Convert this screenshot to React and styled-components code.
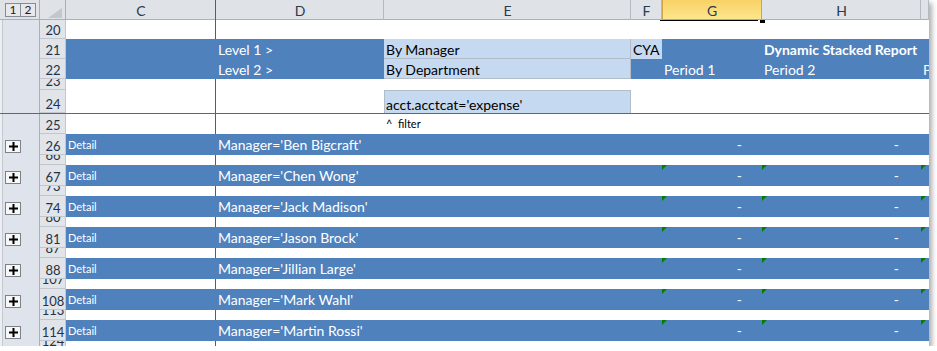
import React from "react";
import styled, { createGlobalStyle } from "styled-components";

const Global = createGlobalStyle`
  body {
    margin: 0;
    background: #fff;
    font-family: Lato, "Liberation Sans", sans-serif;
  }
`;

const COLS = "40px 26px 150px 168px 247px 31px 100px 159px 8px";
const BLUE = "#4f81bd";
const LIGHT = "#c5d9f1";

const Sheet = styled.div`
  width: 929px;
  height: 346px;
  overflow: hidden;
  background: #fff;
  box-shadow: 3px 3px 5px rgba(0, 0, 0, 0.32);
`;

const Row = styled.div`
  display: grid;
  grid-template-columns: ${COLS};
  height: ${(p) => p.$h}px;
`;

const Gutter = styled.div`
  display: flex;
  align-items: ${(p) => (p.$top ? "center" : "flex-end")};
  padding: ${(p) => (p.$top ? "0 0 0 5px" : "0 0 2px 5px")};
  background: ${(p) =>
    p.$top
      ? "#dfe2e7"
      : "linear-gradient(to right, #eceef2 0 2px, #c4cad3 2px 3px, #dfe3ec 3px)"};
  box-shadow: inset -1px 0 #a9b0ba ${(p) => (p.$top ? ", inset 0 -1px #a9b0ba" : "")};
`;

const LevelBtn = styled.div`
  width: 14px;
  height: 12px;
  border: 1px solid #868c94;
  margin-right: -1px;
  background: #e6e8ec;
  color: #1c1c1c;
  font-size: 12px;
  line-height: 12px;
  text-align: center;
`;

const PlusBtn = styled.div`
  width: 14px;
  height: 11px;
  border: 1px solid #7d828a;
  background: #f7f7f7;
  display: flex;
  align-items: center;
  justify-content: center;
`;

const Corner = styled.div`
  display: flex;
  align-items: flex-end;
  justify-content: flex-end;
  padding: 0 4px 2px 0;
  background: #dfe2e7;
  box-shadow: inset -1px -1px #a9b0ba;
`;

const ColHead = styled.div`
  position: relative;
  display: flex;
  align-items: center;
  justify-content: center;
  font-size: 14px;
  color: #2c3a4d;
  background: ${(p) => (p.$sel ? "linear-gradient(#f8d166, #fde88e)" : "#dfe2e7")};
  box-shadow: ${(p) =>
    p.$sel
      ? "inset 1px 0 #d1a446, inset -1px 0 #d1a446, inset 0 -1px #d1a446"
      : `inset -1px 0 ${p.$freeze ? "#5c5c5c" : "#b3bac3"}, inset 0 -1px #a9b0ba`};

  ${(p) =>
    p.$sel &&
    `
    &::after {
      content: "";
      position: absolute;
      left: -2px;
      bottom: -1px;
      width: 98px;
      height: 1px;
      background: #000;
    }
    &::before {
      content: "";
      position: absolute;
      right: -3px;
      bottom: -3px;
      width: 5px;
      height: 3px;
      background: #000;
      z-index: 2;
    }
  `}
`;

const RowNum = styled.div`
  display: flex;
  align-items: ${(p) => (p.$short ? "flex-start" : "flex-end")};
  justify-content: center;
  padding-bottom: ${(p) => (p.$short ? 0 : 2)}px;
  overflow: hidden;
  background: #e1e4e9;
  box-shadow: inset -1px -1px #c2c7ce;
  color: #253246;
  font-size: 13px;
  line-height: 14px;

  span {
    margin-top: ${(p) => (p.$short ? `${p.$shift}px` : 0)};
  }
`;

const Cell = styled.div`
  position: relative;
  display: flex;
  align-items: ${(p) => (p.$mid ? "center" : "flex-end")};
  justify-content: ${(p) => (p.$right ? "flex-end" : "flex-start")};
  padding: 0 ${(p) => p.$pr || 2}px ${(p) => (p.$mid ? 0 : p.$pb ?? 1)}px 2px;
  background: ${(p) => (p.$fill === "blue" ? BLUE : p.$fill === "light" ? LIGHT : "transparent")};
  color: ${(p) => (p.$fill === "blue" ? "#fff" : "#000")};
  font-size: ${(p) => (p.$small ? 11 : 14)}px;
  line-height: ${(p) => (p.$small ? 14 : 17)}px;
  font-weight: ${(p) => (p.$bold ? 700 : 400)};
  white-space: nowrap;
  overflow: ${(p) => (p.$clip ? "hidden" : "visible")};
  box-shadow: ${(p) => p.$edge || "none"};
`;

const Flag = styled.i`
  position: absolute;
  top: 0;
  left: 0;
  width: 0;
  height: 0;
  border-top: 5px solid #008000;
  border-right: 5px solid transparent;
`;

const FreezeLine = styled.div`
  height: 1px;
  background: #666;
`;

const Plus = () => (
  <svg width="9" height="9" viewBox="0 0 9 9">
    <rect x="3.5" y="0" width="2" height="9" fill="#000" />
    <rect x="0" y="3.5" width="9" height="2" fill="#000" />
  </svg>
);

const CornerTri = () => (
  <svg width="14" height="10" viewBox="0 0 14 10">
    <polygon points="14,0 14,10 0,10" fill="#c3c7cd" />
  </svg>
);

const FREEZE = "inset -1px 0 #5c5c5c";
const LIGHT_EDGE = "inset -1px -1px #b3bdca";

const managers = [
  [26, 66, "Ben Bigcraft", false],
  [67, 73, "Chen Wong", true],
  [74, 80, "Jack Madison", true],
  [81, 87, "Jason Brock", true],
  [88, 107, "Jillian Large", true],
  [108, 113, "Mark Wahl", true],
  [114, 124, "Martin Rossi", true],
];

const Num = ({ n, short, shift }) => (
  <RowNum $short={short} $shift={shift}>
    <span>{n}</span>
  </RowNum>
);

const Blank = ({ n, h, short, shift, children }) => (
  <Row $h={h}>
    <Gutter />
    <Num n={n} short={short} shift={shift} />
    <Cell $edge={FREEZE} />
    {children || (
      <>
        <Cell />
        <Cell />
        <Cell />
        <Cell />
        <Cell />
        <Cell />
      </>
    )}
  </Row>
);

const ManagerRow = ({ n, name, flags }) => (
  <Row $h={21}>
    <Gutter>
      <PlusBtn>
        <Plus />
      </PlusBtn>
    </Gutter>
    <Num n={n} />
    <Cell $fill="blue" $small $pb={3}>
      Detail
    </Cell>
    <Cell $fill="blue" $mid>
      Manager='{name}'
    </Cell>
    <Cell $fill="blue" />
    <Cell $fill="blue" />
    <Cell $fill="blue" $mid $right $pr={20}>
      {flags && <Flag />}-
    </Cell>
    <Cell $fill="blue" $mid $right $pr={22}>
      {flags && <Flag />}-
    </Cell>
    <Cell $fill="blue">{flags && <Flag />}</Cell>
  </Row>
);

export default function App() {
  return (
    <>
      <Global />
      <Sheet>
        <Row $h={20}>
          <Gutter $top>
            <LevelBtn>1</LevelBtn>
            <LevelBtn>2</LevelBtn>
          </Gutter>
          <Corner>
            <CornerTri />
          </Corner>
          <ColHead $freeze>C</ColHead>
          <ColHead>D</ColHead>
          <ColHead>E</ColHead>
          <ColHead>F</ColHead>
          <ColHead $sel>G</ColHead>
          <ColHead>H</ColHead>
          <ColHead />
        </Row>

        <Blank n={20} h={19} />

        <Row $h={20}>
          <Gutter />
          <Num n={21} />
          <Cell $fill="blue" />
          <Cell $fill="blue">Level 1 &gt;</Cell>
          <Cell $fill="light" $edge={LIGHT_EDGE}>
            By Manager
          </Cell>
          <Cell $fill="light">CYA</Cell>
          <Cell $fill="blue" />
          <Cell $fill="blue" $bold>
            Dynamic Stacked Report
          </Cell>
          <Cell $fill="blue" />
        </Row>

        <Row $h={20}>
          <Gutter />
          <Num n={22} />
          <Cell $fill="blue" />
          <Cell $fill="blue">Level 2 &gt;</Cell>
          <Cell $fill="light" $edge={LIGHT_EDGE}>
            By Department
          </Cell>
          <Cell $fill="blue" />
          <Cell $fill="blue">Period 1</Cell>
          <Cell $fill="blue">Period 2</Cell>
          <Cell $fill="blue" $clip>
            Period 3
          </Cell>
        </Row>

        <Blank n={23} h={11} short shift={-5} />

        <Blank n={24} h={23}>
          <Cell />
          <Cell $fill="light" $pb={0} $edge="inset 1px 1px #b3bdca, inset -1px 0 #b3bdca">
            acct.acctcat='expense'
          </Cell>
          <Cell />
          <Cell />
          <Cell />
          <Cell />
        </Blank>

        <FreezeLine />

        <Blank n={25} h={20}>
          <Cell />
          <Cell $small $mid>
            ^&nbsp; filter
          </Cell>
          <Cell />
          <Cell />
          <Cell />
          <Cell />
        </Blank>

        {managers.map(([n, gap, name, flags]) => (
          <React.Fragment key={n}>
            <ManagerRow n={n} name={name} flags={flags} />
            <Blank n={gap} h={10} short shift={-7} />
          </React.Fragment>
        ))}
      </Sheet>
    </>
  );
}
